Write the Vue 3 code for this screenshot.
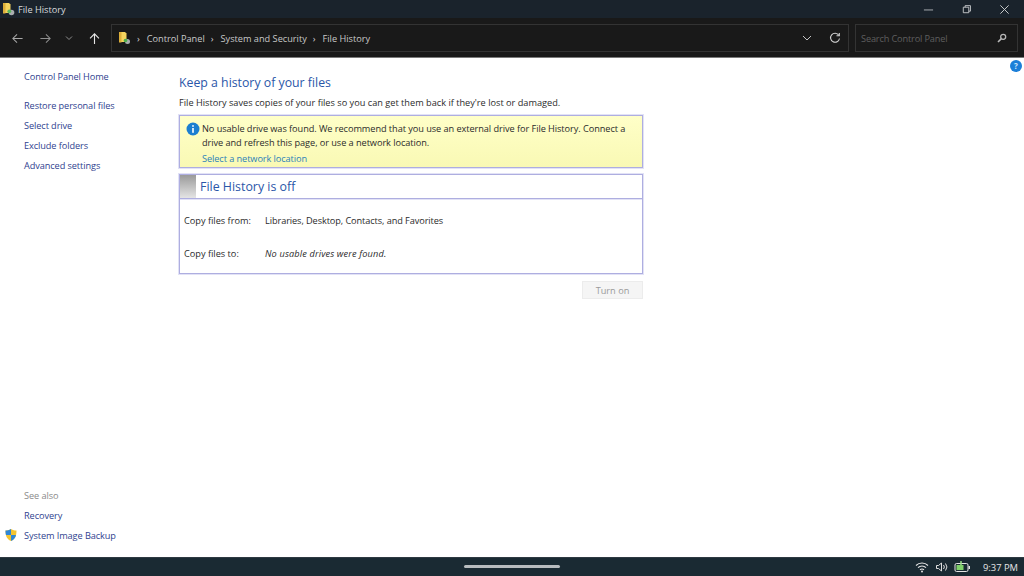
<script setup>
const tasks = ['Restore personal files', 'Select drive', 'Exclude folders', 'Advanced settings']
</script>

<template>
  <div class="page">
    <header class="titlebar">
      <svg class="folder small" viewBox="0 0 14 14">
        <path d="M2 1h6l1.500 1.500V11H2z" fill="#f5d45e" />
        <path d="M2 1h2.500v10.500H2z" fill="#dcae3a" />
        <circle cx="10.500" cy="10.500" r="2.800" fill="#a9adb0" />
        <circle cx="8.300" cy="9.300" r="1.900" fill="#5cb85c" />
      </svg>
      <span class="title">File History</span>
      <div class="winctl">
        <svg viewBox="0 0 12 12"><path d="M1 6.500h10" stroke="#b4b8bb" fill="none" /></svg>
        <svg viewBox="0 0 12 12"><path d="M2.500 3.500h6v6h-6zM4.500 3.500V1.800h5.800v6H8.500" stroke="#c8cbcd" fill="none" /></svg>
        <svg viewBox="0 0 12 12"><path d="M1.500 1.500l9 9M10.500 1.500l-9 9" stroke="#d4d6d8" fill="none" /></svg>
      </div>
    </header>

    <nav class="navbar">
      <div class="navbtns">
        <svg class="arrow" viewBox="0 0 14 14"><path d="M12.500 7H2M6.500 2.500L2 7l4.500 4.500" stroke="#a8a8a8" stroke-width="1.100" fill="none" /></svg>
        <svg class="arrow" viewBox="0 0 14 14"><path d="M1.500 7H12M7.500 2.500L12 7l-4.500 4.500" stroke="#8e8e8e" stroke-width="1.100" fill="none" /></svg>
        <svg class="chev" viewBox="0 0 8 6"><path d="M1 1.500l3 3 3-3" stroke="#8e8e8e" fill="none" /></svg>
        <svg class="arrow up" viewBox="0 0 14 14"><path d="M7 13V2M2.200 6.800L7 2l4.800 4.800" stroke="#e6e6e6" stroke-width="1.200" fill="none" /></svg>
      </div>
      <div class="address">
        <svg class="folder" viewBox="0 0 14 14">
          <path d="M2 1h6l1.500 1.500V11H2z" fill="#f5d45e" />
          <path d="M2 1h2.500v10.500H2z" fill="#dcae3a" />
          <circle cx="10.500" cy="10.500" r="2.500" fill="#a9adb0" />
          <circle cx="8.500" cy="9.500" r="1.800" fill="#4cae4c" />
        </svg>
        <span class="sep">›</span><span>Control Panel</span>
        <span class="sep">›</span><span>System and Security</span>
        <span class="sep">›</span><span>File History</span>
        <svg class="addr-chev" viewBox="0 0 10 6"><path d="M1 1l4 4 4-4" stroke="#c4c4c4" fill="none" /></svg>
        <svg class="refresh" viewBox="0 0 12 12"><path d="M9.800 3.200A4.500 4.500 0 1 0 10.500 6.500" stroke="#d0d0d0" stroke-width="1.100" fill="none" /><path d="M10.300 1v2.800H7.500" stroke="#d0d0d0" stroke-width="1.100" fill="none" /></svg>
      </div>
      <div class="search">
        <span>Search Control Panel</span>
        <svg viewBox="0 0 10 10"><circle cx="6.200" cy="3.800" r="2.500" stroke="#b8b8b8" stroke-width="1.300" fill="none" /><path d="M4.400 5.600L1 9" stroke="#b8b8b8" stroke-width="1.600" /></svg>
      </div>
    </nav>

    <div class="body">
      <aside class="side">
        <div class="home">Control Panel Home</div>
        <ul class="tasks">
          <li v-for="t in tasks" :key="t">{{ t }}</li>
        </ul>
        <div class="seealso">
          <div class="see-h">See also</div>
          <div class="see-l">Recovery</div>
          <div class="see-l shield-row">
            <svg class="shield" viewBox="0 0 14 14">
              <path d="M7 1c2 1.200 3.500 1.500 5.500 1.500 0 5-1 8.500-5.500 10.500C2.500 11 1.500 7.500 1.500 2.500 3.500 2.500 5 2.200 7 1z" fill="#f4c430" />
              <path d="M7 1c-2 1.200-3.500 1.500-5.500 1.500 0 2 .2 3.300.5 4.500H7z" fill="#2f86d6" />
              <path d="M7 7h5c-.7 2.800-2 4.700-5 6z" fill="#2f86d6" />
            </svg>
            System Image Backup
          </div>
        </div>
      </aside>

      <main class="main">
        <h1>Keep a history of your files</h1>
        <p class="lead">File History saves copies of your files so you can get them back if they're lost or damaged.</p>

        <section class="notice">
          <svg class="info" viewBox="0 0 14 14">
            <circle cx="7" cy="7" r="6.500" fill="#1c7fd0" />
            <rect x="6.200" y="6" width="1.600" height="4.800" fill="#fff" />
            <rect x="6.200" y="3.200" width="1.600" height="1.600" fill="#fff" />
          </svg>
          <div class="notice-text">
            <p>No usable drive was found. We recommend that you use an external drive for File History. Connect a drive and refresh this page, or use a network location.</p>
            <a>Select a network location</a>
          </div>
        </section>

        <section class="status">
          <div class="status-head">
            <div class="swatch"></div>
            <h2>File History is off</h2>
          </div>
          <div class="rows">
            <div class="row"><span class="label">Copy files from:</span><span class="value">Libraries, Desktop, Contacts, and Favorites</span></div>
            <div class="row"><span class="label">Copy files to:</span><em>No usable drives were found.</em></div>
          </div>
        </section>

        <div class="actions"><button disabled>Turn on</button></div>
      </main>

      <div class="help">?</div>
    </div>

    <footer class="taskbar">
      <div class="pill"></div>
      <div class="tray">
        <svg class="wifi" viewBox="0 0 14 12"><path d="M1 4.500a8.500 8.500 0 0 1 12 0M3 6.700a5.600 5.600 0 0 1 8 0M5 8.800a2.800 2.800 0 0 1 4 0" stroke="#e6e6e6" stroke-width="1.100" fill="none" /><circle cx="7" cy="10.500" r="1" fill="#e6e6e6" /></svg>
        <svg class="vol" viewBox="0 0 14 12"><path d="M1.500 4.500h2L6.500 2v8L3.500 7.500h-2z" stroke="#e0e0e0" fill="none" /><path d="M8.500 4a3 3 0 0 1 0 4M10.500 2.500a5.500 5.500 0 0 1 0 7" stroke="#e0e0e0" fill="none" /></svg>
        <svg class="batt" viewBox="0 0 17 12"><rect x="1" y="2.500" width="13" height="8" rx="1.500" stroke="#e4e4e4" fill="none" /><rect x="2.500" y="4" width="7" height="5" fill="#7fd16a" /><rect x="14.500" y="5" width="1.500" height="3" fill="#e4e4e4" /><path d="M7 0v4" stroke="#9be08a" stroke-width="1.500" /></svg>
        <span class="clock">9:37 PM</span>
      </div>
    </footer>
  </div>
</template>

<style>
html, body { margin: 0; padding: 0; background: #fff; }
</style>

<style scoped>
.page {
  width: 1024px;
  height: 576px;
  display: flex;
  flex-direction: column;
  overflow: hidden;
  font-family: "Open Sans", "Noto Sans", sans-serif;
  font-size: 9.200px;
  color: #2b2b2b;
  background: #fff;
}
.titlebar {
  height: 18px;
  background: #1a232c;
  display: flex;
  align-items: center;
  color: #d8dadc;
  padding-left: 1px;
  flex: none;
}
.folder { width: 14px; height: 14px; }
.title { margin-left: 3px; }
.winctl { margin-left: auto; display: flex; gap: 27px; padding-right: 14px; }
.winctl svg { width: 11px; height: 11px; }

.navbar {
  height: 40px;
  box-sizing: border-box;
  background: #191919;
  border-bottom: 1px solid #7a7a7a;
  display: flex;
  align-items: center;
  flex: none;
  color: #c8c8c8;
}
.navbtns { width: 111px; display: flex; align-items: center; padding: 1px 0 0 11px; box-sizing: border-box; flex: none; }
.arrow { width: 13px; height: 13px; }
.navbtns .arrow:nth-child(2) { margin-left: 15px; }
.chev { width: 8px; height: 6px; margin-left: 13px; }
.up { margin-left: 15px; }
.address {
  width: 738px;
  height: 28px;
  box-sizing: border-box;
  border: 1px solid #333;
  display: flex;
  align-items: center;
  padding: 1px 0 0 5px;
  flex: none;
}
.sep { margin: 0 7px 0 6px; color: #d8d8d8; }
.addr-chev { width: 10px; height: 6px; margin-left: auto; }
.refresh { width: 12px; height: 12px; margin: 0 7px 0 17px; }
.search {
  margin-left: 6px;
  width: 163px;
  height: 28px;
  box-sizing: border-box;
  border: 1px solid #333;
  display: flex;
  align-items: center;
  justify-content: space-between;
  padding: 1px 10px 0 5px;
  color: #5f5f5f;
  letter-spacing: -0.15px;
  flex: none;
}
.search svg { width: 10px; height: 10px; }

.body { flex: 1; display: flex; position: relative; background: #fff; min-height: 0; }
.side {
  width: 179px;
  flex: none;
  display: flex;
  flex-direction: column;
  padding: 12px 0 15px 24px;
  box-sizing: border-box;
  color: #2f3f8f;
  letter-spacing: -0.09px;
}
.home { line-height: 13px; }
.tasks { list-style: none; margin: 16px 0 0; padding: 0; display: flex; flex-direction: column; }
.tasks li { line-height: 13px; height: 20px; }
.seealso { margin-top: auto; display: flex; flex-direction: column; gap: 7px; line-height: 13px; }
.see-h { color: #8a8a8a; }
.shield-row { position: relative; }
.shield { position: absolute; left: -20px; top: -1px; width: 14px; height: 14px; }

.main { width: 464px; flex: none; padding-top: 17px; }
h1 { margin: 0; font-size: 12.300px; font-weight: 400; color: #2a56a8; line-height: 16px; }
.lead { margin: 5px 0 0; line-height: 13px; color: #2b2b2b; }
.notice {
  margin-top: 6px;
  height: 53px;
  box-sizing: border-box;
  border: 1px solid #aeaee0;
  box-shadow: 0 0 0 1px rgba(190, 190, 235, 0.45);
  background: linear-gradient(#ffffc8, #f9f9b4);
  display: flex;
  padding: 6px 8px 0 6px;
  gap: 2px;
  letter-spacing: -0.06px;
}
.info { width: 14px; height: 14px; flex: none; margin-top: 0; }
.notice-text p { margin: 0; line-height: 14px; }
.notice-text a { display: block; margin-top: 2px; color: #2b82b8; line-height: 14px; letter-spacing: -0.08px; }
.status {
  margin-top: 6px;
  height: 100px;
  box-sizing: border-box;
  border: 1px solid #aeaee0;
  box-shadow: 0 0 0 1px rgba(190, 190, 235, 0.45);
  display: flex;
  flex-direction: column;
}
.status-head {
  height: 24px;
  box-sizing: border-box;
  border-bottom: 1px solid #aeaee0;
  box-shadow: 0 1px 0 rgba(190, 190, 235, 0.45);
  display: flex;
  flex: none;
}
.swatch { width: 16px; background: linear-gradient(#9a9a9a, #e4e4e4); flex: none; }
h2 { margin: 0 0 0 4px; font-size: 12.400px; font-weight: 400; color: #2a56a8; line-height: 23px; }
.rows { display: flex; flex-direction: column; gap: 19px; padding: 15px 0 0 4px; }
.row { display: flex; line-height: 14px; }
.label { width: 81px; flex: none; }
.value { letter-spacing: -0.09px; }
.row em { letter-spacing: 0.14px; }
.actions { display: flex; justify-content: flex-end; margin-top: 7px; }
button {
  width: 61px;
  height: 18px;
  padding: 0;
  border: 1px solid #ececec;
  background: #f5f5f5;
  color: #9a9a9a;
  font: inherit;
}
.help {
  position: absolute;
  right: 2px;
  top: 2px;
  width: 12px;
  height: 12px;
  border-radius: 50%;
  background: #1c7fd8;
  color: #cfe6fa;
  font-size: 8px;
  font-weight: 700;
  line-height: 12px;
  text-align: center;
}

.taskbar {
  height: 19px;
  background: #1a2a33;
  flex: none;
  position: relative;
  display: flex;
  align-items: center;
  justify-content: flex-end;
  color: #e6e6e6;
  border-top: 1px solid #2e3a42;
  box-sizing: border-box;
}
.pill {
  position: absolute;
  left: 464px;
  top: 7px;
  width: 96px;
  height: 3px;
  border-radius: 2px;
  background: #b8bcbf;
}
.tray { display: flex; align-items: center; padding-right: 5px; }
.wifi { width: 14px; height: 12px; }
.vol { width: 14px; height: 12px; margin-left: 6px; }
.batt { width: 17px; height: 12px; margin-left: 5px; }
.clock { margin-left: 12px; font-size: 9.400px; width: 36px; }
</style>
